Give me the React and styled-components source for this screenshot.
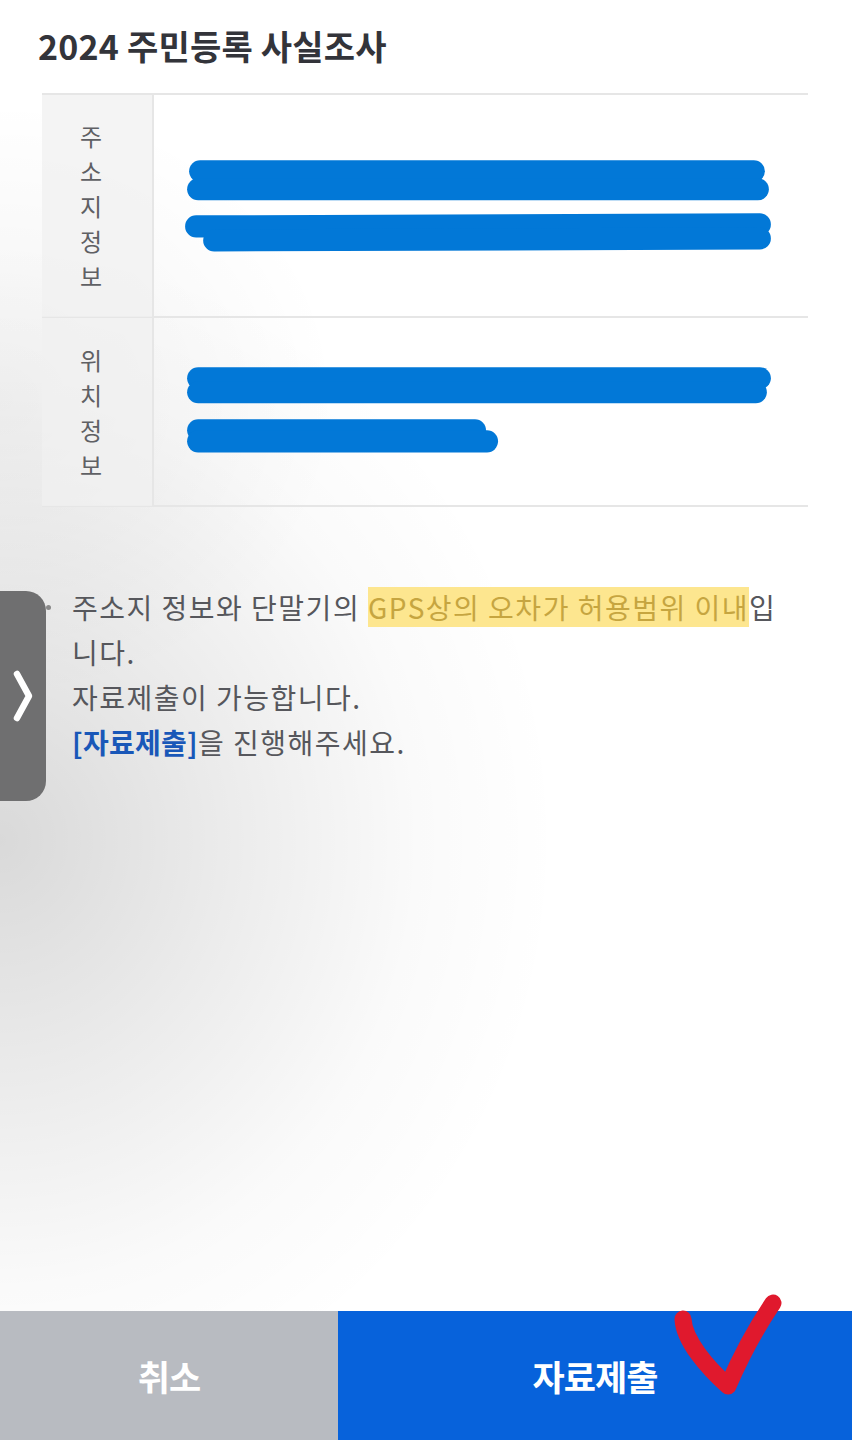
import React from 'react';
import styled, { createGlobalStyle } from 'styled-components';

const GlobalStyle = createGlobalStyle`
  html, body {
    margin: 0;
    padding: 0;
    background: #fff;
  }
  body {
    font-family: "Noto Sans CJK KR", "Noto Sans", sans-serif;
  }
`;

const Page = styled.div`
  position: relative;
  min-height: 1440px;
  display: flex;
  flex-direction: column;
  background:
    radial-gradient(ellipse 560px 600px at 0px 840px, rgba(0, 0, 0, 0.15) 0%, rgba(0, 0, 0, 0.08) 40%, rgba(0, 0, 0, 0.02) 75%, rgba(0, 0, 0, 0) 100%),
    radial-gradient(ellipse 340px 300px at 0px 400px, rgba(0, 0, 0, 0.05), rgba(0, 0, 0, 0) 100%),
    #fff;
  overflow: hidden;
`;

const Main = styled.main`
  flex: 1;
  padding: 20px 40px 0 42px;
`;

const Title = styled.h1`
  margin: 0 0 0 -4px;
  font-size: 34px;
  line-height: 52px;
  font-weight: 700;
  color: #33343a;
  letter-spacing: 0.2px;
`;

const Table = styled.div`
  margin-top: 21px;
  margin-right: 4px;
  border-top: 2px solid #e6e6e6;
`;

const Row = styled.div`
  display: grid;
  grid-template-columns: 112px 1fr;
  height: ${p => p.$h}px;
  border-bottom: 2px solid #e6e6e6;
`;

const Label = styled.div`
  background: rgba(240, 240, 240, 0.75);
  border-right: 2px solid #e6e6e6;
  display: flex;
  flex-direction: column;
  align-items: center;
  justify-content: center;
  font-size: 24px;
  line-height: 35px;
  color: #5f6064;
  padding-right: 12px;
`;

const Char = styled.span`
  display: block;
  height: 35px;
`;

const Cell = styled.div`
  position: relative;
`;

const Scribble = styled.svg`
  display: block;
  width: 100%;
  height: 100%;
`;

const Note = styled.div`
  margin-top: 78px;
  position: relative;
  padding-left: 30px;
  font-size: 28px;
  line-height: 45px;
  color: #56575c;
  letter-spacing: 1.5px;

  &::before {
    content: '';
    position: absolute;
    left: 4px;
    top: 20px;
    width: 5px;
    height: 5px;
    border-radius: 50%;
    background: #888;
  }
`;

const Mark = styled.span`
  background: #fde68f;
  color: #c6a540;
`;

const Strong = styled.b`
  color: #1957b8;
  font-weight: 700;
  letter-spacing: 0.3px;
`;

const Handle = styled.div`
  position: absolute;
  left: 0;
  top: 591px;
  width: 46px;
  height: 210px;
  background: #6f6f70;
  border-radius: 0 20px 20px 0;
  display: flex;
  align-items: center;
  justify-content: center;
`;

const Footer = styled.footer`
  display: grid;
  grid-template-columns: 338px 1fr;
  height: 129px;
`;

const FooterButton = styled.button`
  border: none;
  margin: 0;
  font-family: inherit;
  font-size: 35px;
  font-weight: 700;
  color: #fff;
  background: ${p => (p.$primary ? '#0762db' : '#b8bbc1')};
  letter-spacing: -1px;
  padding-bottom: 2px;
`;

const Check = styled.svg`
  position: absolute;
  left: 660px;
  top: 1286px;
  width: 140px;
  height: 120px;
`;

const Lines = ({ rows, h }) => (
  <Scribble viewBox={`0 0 652 ${h}`} preserveAspectRatio="none">
    {rows.map(([x1, y1, x2, y2], i) => (
      <line
        key={i}
        x1={x1}
        y1={y1}
        x2={x2}
        y2={y2}
        stroke="#0278d7"
        strokeWidth="22"
        strokeLinecap="round"
      />
    ))}
  </Scribble>
);

const Vertical = ({ text }) => (
  <Label>
    {text.split('').map((c, i) => (
      <Char key={i}>{c}</Char>
    ))}
  </Label>
);

export default function App() {
  return (
    <>
      <GlobalStyle />
      <Page>
        <Main>
          <Title>2024 주민등록 사실조사</Title>
          <Table>
            <Row $h={221}>
              <Vertical text="주소지정보" />
              <Cell>
                <Lines
                  h={221}
                  rows={[
                    [46, 76, 598, 76],
                    [44, 94, 602, 94],
                    [42, 131, 604, 129],
                    [60, 145, 604, 143]
                  ]}
                />
              </Cell>
            </Row>
            <Row $h={187}>
              <Vertical text="위치정보" />
              <Cell>
                <Lines
                  h={187}
                  rows={[
                    [44, 60, 604, 60],
                    [44, 74, 600, 74],
                    [44, 112, 320, 112],
                    [44, 123, 332, 123]
                  ]}
                />
              </Cell>
            </Row>
          </Table>

          <Note>
            주소지 정보와 단말기의 <Mark>GPS상의 오차가 허용범위 이내</Mark>입<br />
            니다.
            <br />
            자료제출이 가능합니다.
            <br />
            <Strong>[자료제출]</Strong>을 진행해주세요.
          </Note>
        </Main>

        <Handle>
          <svg width="24" height="56" viewBox="0 0 24 56">
            <path d="M6 6 L18 28 L6 50" fill="none" stroke="#fff" strokeWidth="6.5" strokeLinecap="round" strokeLinejoin="round" />
          </svg>
        </Handle>

        <Footer>
          <FooterButton>취소</FooterButton>
          <FooterButton $primary>자료제출</FooterButton>
        </Footer>

        <Check viewBox="0 0 140 120">
          <path
            d="M23 33 C24 55 48 82 68 100 C80 72 96 42 113 17"
            fill="none"
            stroke="#e0192d"
            strokeWidth="17"
            strokeLinecap="round"
            strokeLinejoin="round"
          />
        </Check>
      </Page>
    </>
  );
}
